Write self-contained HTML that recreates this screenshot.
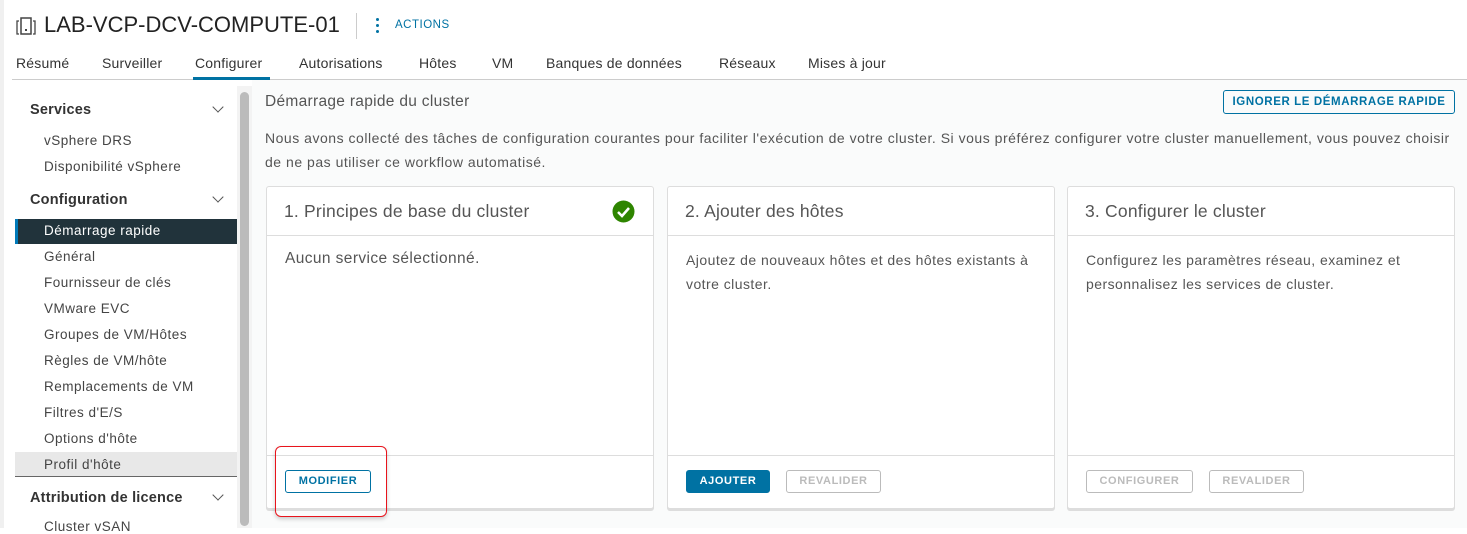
<!DOCTYPE html>
<html><head><meta charset="utf-8"><style>
*{margin:0;padding:0;box-sizing:border-box}
body{width:1467px;height:528px;overflow:hidden;background:#fff;font-family:"Liberation Sans",sans-serif;color:#333;position:relative}
.a{position:absolute;white-space:nowrap}
.tab{position:absolute;top:55px;font-size:14px;color:#333;letter-spacing:.2px}
.si{position:absolute;left:44px;font-size:13.5px;color:#444;letter-spacing:.5px}
.sh{position:absolute;left:30px;font-size:14.5px;font-weight:bold;color:#333;letter-spacing:.2px}
.chev{position:absolute;left:214px;width:8px;height:8px;border-right:1.5px solid #555;border-bottom:1.5px solid #555;transform:rotate(45deg)}
.card{position:absolute;top:186px;width:388px;height:323px;background:#fff;border:1px solid #ddd;border-radius:3px;box-shadow:0 2px 0 #ddd}
.card .h{position:absolute;left:17px;top:14px;font-size:17.5px;color:#555;letter-spacing:.2px}
.card .hl{position:absolute;left:0;right:0;top:48px;border-top:1px solid #ddd}
.card .fl{position:absolute;left:0;right:0;top:268px;border-top:1px solid #ddd}
.card .b{position:absolute;left:18px;top:61px;font-size:14px;color:#555;line-height:24px;white-space:normal;width:360px;letter-spacing:.45px}
.btn{position:absolute;top:283px;height:23px;border:1px solid #bbb;border-radius:3px;font-size:11px;letter-spacing:.6px;color:#bbb;text-align:center;line-height:21px;font-weight:bold}
</style></head><body>
<div class="a" style="left:0;top:0;width:4px;height:528px;background:#f0f0f0"></div>
<svg class="a" style="left:16px;top:17px" width="20" height="18" viewBox="0 0 20 18"><rect x="5" y="1" width="10" height="16" fill="none" stroke="#444" stroke-width="1.5"/><path d="M3 4H1v13h2M17 4h2v13h-2" fill="none" stroke="#444" stroke-width="1.3"/><rect x="9" y="12" width="2" height="2" fill="#444"/></svg>
<div class="a" style="left:44px;top:12px;font-size:22px;color:#222">LAB-VCP-DCV-COMPUTE-01</div>
<div class="a" style="left:356px;top:13px;width:1px;height:26px;background:#ccc"></div>
<div class="a" style="left:376px;top:18px;width:3px;height:3px;background:#0072a3;border-radius:50%;box-shadow:0 6px 0 #0072a3,0 12px 0 #0072a3"></div>
<div class="a" style="left:395px;top:19px;font-size:11.5px;color:#0072a3;letter-spacing:.5px">ACTIONS</div>
<div class="tab" style="left:16px">Résumé</div>
<div class="tab" style="left:102px">Surveiller</div>
<div class="tab" style="left:195px">Configurer</div>
<div class="tab" style="left:299px">Autorisations</div>
<div class="tab" style="left:419px">Hôtes</div>
<div class="tab" style="left:492px">VM</div>
<div class="tab" style="left:546px">Banques de données</div>
<div class="tab" style="left:719px">Réseaux</div>
<div class="tab" style="left:808px">Mises à jour</div>
<div class="a" style="left:12px;top:79px;width:1455px;height:1px;background:#ccc"></div>
<div class="a" style="left:193px;top:77px;width:77px;height:3px;background:#0072a3"></div>
<div class="a" style="left:252px;top:80px;width:1215px;height:448px;background:#fafbfb"></div>
<div class="a" style="left:237px;top:86px;width:15px;height:442px;background:#f3f3f3"></div>
<div class="a" style="left:240px;top:92px;width:9px;height:434px;background:#bbb;border-radius:5px"></div>
<div class="sh" style="top:102px">Services</div><div class="chev" style="top:103px"></div>
<div class="si" style="top:133px">vSphere DRS</div>
<div class="si" style="top:159px">Disponibilité vSphere</div>
<div class="sh" style="top:192px">Configuration</div><div class="chev" style="top:193px"></div>
<div class="a" style="left:15px;top:219px;width:222px;height:25px;background:#21333b;border-left:3px solid #0079b8"></div>
<div class="si" style="top:223px;color:#fff">Démarrage rapide</div>
<div class="si" style="top:249px">Général</div>
<div class="si" style="top:275px">Fournisseur de clés</div>
<div class="si" style="top:301px">VMware EVC</div>
<div class="si" style="top:327px">Groupes de VM/Hôtes</div>
<div class="si" style="top:353px">Règles de VM/hôte</div>
<div class="si" style="top:379px">Remplacements de VM</div>
<div class="si" style="top:405px">Filtres d'E/S</div>
<div class="si" style="top:431px">Options d'hôte</div>
<div class="a" style="left:15px;top:452px;width:222px;height:25px;background:#e8e8e8;border-bottom:1px solid #666"></div>
<div class="si" style="top:457px">Profil d'hôte</div>
<div class="sh" style="top:490px">Attribution de licence</div><div class="chev" style="top:491px"></div>
<div class="si" style="top:519px">Cluster vSAN</div>
<div class="a" style="left:265px;top:93px;font-size:15.5px;color:#555;letter-spacing:.3px">Démarrage rapide du cluster</div>
<div class="a" style="left:1223px;top:90px;width:232px;height:24px;border:1px solid #0072a3;border-radius:3px;font-size:11.5px;letter-spacing:.6px;color:#0072a3;text-align:center;line-height:22px;font-weight:bold">IGNORER LE DÉMARRAGE RAPIDE</div>
<div class="a" style="left:265px;top:126px;font-size:14px;color:#555;line-height:24px;letter-spacing:.52px">Nous avons collecté des tâches de configuration courantes pour faciliter l'exécution de votre cluster. Si vous préférez configurer votre cluster manuellement, vous pouvez choisir<br>de ne pas utiliser ce workflow automatisé.</div>
<div class="card" style="left:266px"><div class="h">1. Principes de base du cluster</div>
<svg class="a" style="left:345px;top:13px" width="23" height="23" viewBox="0 0 23 23"><circle cx="11.5" cy="11.5" r="11" fill="#2e8500"/><path d="M6 12l4 4 7-8" fill="none" stroke="#fff" stroke-width="2.5"/></svg>
<div class="hl"></div><div class="b" style="font-size:15.5px;top:60px;letter-spacing:.4px">Aucun service sélectionné.</div><div class="fl"></div>
<div class="btn" style="left:18px;width:86px;border-color:#0072a3;color:#0072a3">MODIFIER</div></div>
<div class="card" style="left:667px"><div class="h">2. Ajouter des hôtes</div><div class="hl"></div>
<div class="b" style="width:355px">Ajoutez de nouveaux hôtes et des hôtes existants à votre cluster.</div><div class="fl"></div>
<div class="btn" style="left:18px;width:84px;background:#0072a3;border-color:#0072a3;color:#fff">AJOUTER</div>
<div class="btn" style="left:118px;width:95px">REVALIDER</div></div>
<div class="card" style="left:1067px"><div class="h">3. Configurer le cluster</div><div class="hl"></div>
<div class="b" style="width:320px">Configurez les paramètres réseau, examinez et personnalisez les services de cluster.</div><div class="fl"></div>
<div class="btn" style="left:18px;width:107px">CONFIGURER</div>
<div class="btn" style="left:141px;width:95px">REVALIDER</div></div>
<div class="a" style="left:275px;top:446px;width:112px;height:71px;border:1.5px solid #e8141c;border-radius:6px;box-shadow:0 2px 4px rgba(0,0,0,.2)"></div>
</body></html>
